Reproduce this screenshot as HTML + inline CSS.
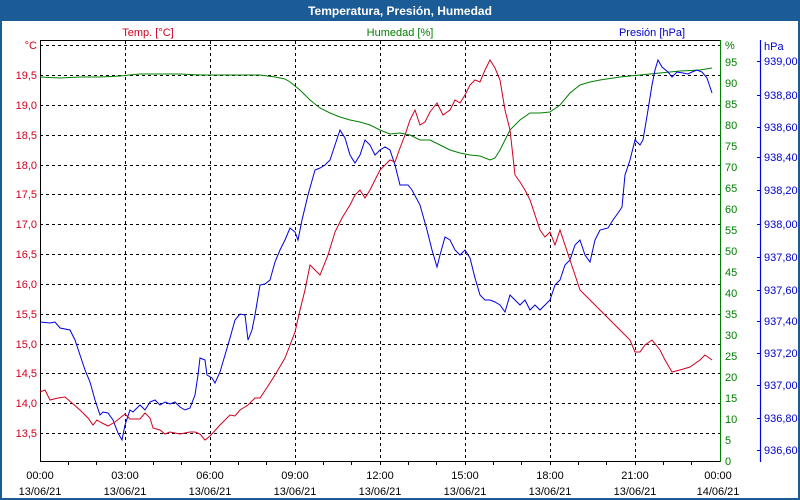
<!DOCTYPE html>
<html><head><meta charset="utf-8"><style>
html,body{margin:0;padding:0;background:#fff}
svg{display:block}
text{font-family:"Liberation Sans",sans-serif;font-size:11px}
</style></head><body>
<svg width="800" height="500" viewBox="0 0 800 500" xmlns="http://www.w3.org/2000/svg">
<rect x="0" y="0" width="800" height="500" fill="#1c5c96"/>
<rect x="2" y="21" width="796" height="477" fill="#fff"/>
<text x="400" y="15" text-anchor="middle" fill="#fff" font-weight="bold" style="font-size:12px">Temperatura, Presión, Humedad</text>
<g stroke="#000" stroke-dasharray="3,3" stroke-width="1">
<path d="M40 45.5H720M40 75.5H720M40 105.5H720M40 135.5H720M40 165.5H720M40 194.5H720M40 224.5H720M40 254.5H720M40 284.5H720M40 314.5H720M40 344.5H720M40 373.5H720M40 403.5H720M40 433.5H720"/>
<path d="M125.5 41V461M210.5 41V461M295.5 41V461M380.5 41V461M465.5 41V461M550.5 41V461M635.5 41V461"/>
</g>
<path d="M40.5 40V461.5H720M40 40.5H720" stroke="#000" fill="none"/>
<path d="M68.5 461v4M96.5 461v4M125.5 461v4M153.5 461v4M181.5 461v4M210.5 461v4M238.5 461v4M266.5 461v4M295.5 461v4M323.5 461v4M351.5 461v4M380.5 461v4M408.5 461v4M436.5 461v4M465.5 461v4M493.5 461v4M521.5 461v4M550.5 461v4M578.5 461v4M606.5 461v4M635.5 461v4M663.5 461v4M691.5 461v4" stroke="#000"/>
<path d="M720.5 40V462" stroke="#008000" stroke-width="1"/>
<path d="M760.5 40V462" stroke="#0000e0" stroke-width="1.2"/>
<g fill="#d00020" text-anchor="end">
<text x="37" y="49">°C</text>
<text x="37" y="79">19,5</text><text x="37" y="109">19,0</text><text x="37" y="139">18,5</text><text x="37" y="169">18,0</text><text x="37" y="198">17,5</text><text x="37" y="228">17,0</text><text x="37" y="258">16,5</text><text x="37" y="288">16,0</text><text x="37" y="318">15,5</text><text x="37" y="348">15,0</text><text x="37" y="377">14,5</text><text x="37" y="407">14,0</text><text x="37" y="437">13,5</text>
</g>
<g fill="#008000">
<text x="725" y="49">%</text>
<text x="725" y="66">95</text><text x="725" y="87">90</text><text x="725" y="108">85</text><text x="725" y="129">80</text><text x="725" y="150">75</text><text x="725" y="171">70</text><text x="725" y="192">65</text><text x="725" y="213">60</text><text x="725" y="234">55</text><text x="725" y="255">50</text><text x="725" y="276">45</text><text x="725" y="297">40</text><text x="725" y="318">35</text><text x="725" y="339">30</text><text x="725" y="360">25</text><text x="725" y="381">20</text><text x="725" y="402">15</text><text x="725" y="423">10</text><text x="725" y="444">5</text><text x="725" y="465">0</text>
</g>
<g fill="#0000d0">
<text x="764" y="50">hPa</text>
<text x="764" y="65">939,00</text><text x="764" y="99">938,80</text><text x="764" y="131">938,60</text><text x="764" y="161">938,40</text><text x="764" y="194">938,20</text><text x="764" y="228">938,00</text><text x="764" y="261">937,80</text><text x="764" y="294">937,60</text><text x="764" y="325">937,40</text><text x="764" y="357">937,20</text><text x="764" y="389">937,00</text><text x="764" y="422">936,80</text><text x="764" y="454">936,60</text>
</g>
<path d="M757 61.5h3M757 95.5h3M757 127.5h3M757 157.5h3M757 190.5h3M757 224.5h3M757 257.5h3M757 290.5h3M757 321.5h3M757 353.5h3M757 385.5h3M757 418.5h3M757 450.5h3" stroke="#0000d0"/>
<text x="148" y="36" text-anchor="middle" fill="#d00020">Temp. [°C]</text>
<text x="400" y="36" text-anchor="middle" fill="#008000">Humedad [%]</text>
<text x="652" y="36" text-anchor="middle" fill="#0000d0">Presión [hPa]</text>
<g fill="#000" text-anchor="middle">
<text x="40" y="479">00:00</text><text x="40" y="495">13/06/21</text>
<text x="125" y="479">03:00</text><text x="125" y="495">13/06/21</text>
<text x="210" y="479">06:00</text><text x="210" y="495">13/06/21</text>
<text x="295" y="479">09:00</text><text x="295" y="495">13/06/21</text>
<text x="380" y="479">12:00</text><text x="380" y="495">13/06/21</text>
<text x="465" y="479">15:00</text><text x="465" y="495">13/06/21</text>
<text x="550" y="479">18:00</text><text x="550" y="495">13/06/21</text>
<text x="635" y="479">21:00</text><text x="635" y="495">13/06/21</text>
<text x="718" y="479">00:00</text><text x="718" y="495">14/06/21</text>
</g>
<polyline fill="none" stroke="#008000" points="40,77 60,78 80,77 100,77 120,76 140,74 160,74 180,74 200,75 220,75 240,75 260,75 275,77 285,79 290,82 300,90 310,100 320,108 330,113 340,117 350,120 360,122 370,125 380,130 390,134 400,133 410,135 420,140 430,140 440,145 450,150 460,153 470,155 480,156 490,160 495,158 500,150 505,140 510,130 515,125 520,120 530,113 540,113 550,112 560,105 570,93 580,85 590,82 600,80 620,77 640,75 660,73 680,71 700,70 712,68"/>
<polyline fill="none" stroke="#0000e0" points="40,322 50,323 55,322 60,328 70,330 75,340 80,355 85,370 90,382 95,400 100,415 103,412 108,413 113,420 118,433 122,440 125,425 130,410 133,412 140,405 145,410 150,402 155,400 160,405 165,402 170,404 175,402 180,407 185,410 190,408 195,395 198,375 200,358 205,360 207,375 212,378 215,383 220,372 225,355 230,338 235,320 240,314 245,315 248,340 252,330 255,315 260,285 265,284 270,280 275,262 280,250 285,240 290,228 295,232 298,240 302,220 308,195 315,170 320,168 325,165 330,160 335,145 340,130 345,138 350,155 355,163 360,155 365,140 370,145 375,155 380,150 385,147 390,150 395,165 400,185 408,185 412,190 420,205 427,230 432,250 437,267 440,255 445,237 450,240 455,250 460,255 465,250 470,258 475,278 480,295 485,300 490,300 495,302 500,305 505,312 510,295 515,300 520,305 525,300 530,310 535,305 540,310 545,305 550,300 555,285 560,280 565,265 570,260 575,245 580,240 585,255 590,262 595,240 600,230 608,228 613,220 618,213 622,207 625,175 630,160 635,140 640,145 643,140 648,110 652,85 655,70 658,60 662,67 668,72 672,77 677,72 683,73 688,74 692,72 697,70 702,72 707,78 712,93"/>
<polyline fill="none" stroke="#d00020" points="40,392 45,390 50,400 58,398 65,397 72,403 80,410 88,418 93,425 97,420 102,423 108,426 115,422 125,414 130,419 140,419 145,413 150,418 153,428 160,430 165,434 170,432 175,433 180,434 190,432 195,432 200,434 205,440 210,436 220,425 230,415 235,416 240,410 248,405 255,398 260,398 268,386 275,375 285,358 295,332 300,310 305,290 310,265 315,270 320,275 328,255 335,232 342,218 350,205 355,195 360,190 365,198 370,190 375,180 380,170 385,165 390,160 395,162 400,148 405,135 410,120 415,110 420,125 425,122 430,112 437,103 443,115 450,110 455,100 460,103 465,95 470,85 475,80 480,82 485,70 490,60 495,68 500,80 505,110 510,130 515,175 520,182 525,190 530,200 535,215 540,230 545,237 550,232 555,245 560,230 565,245 570,260 575,275 580,290 590,300 600,310 610,320 620,330 630,340 635,352 640,352 645,345 652,340 660,350 665,360 672,372 680,370 690,367 700,360 705,355 712,360"/>
</svg>
</body></html>
